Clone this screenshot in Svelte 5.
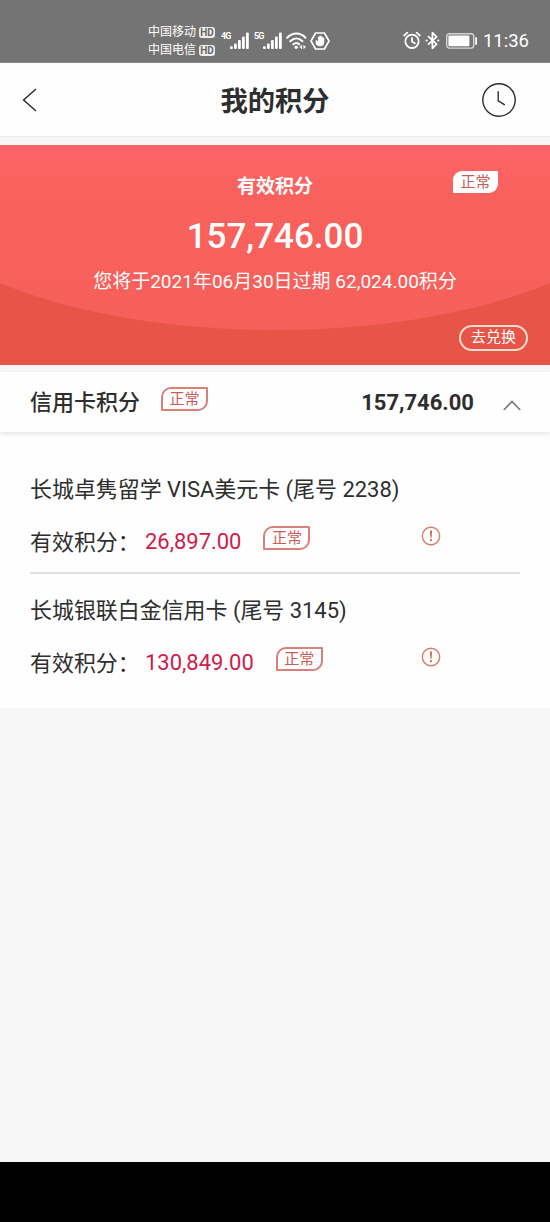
<script>
  const total = '157,746.00';
  const carriers = ['中国移动', '中国电信'];
  const signals = ['4G', '5G'];

  const cards = [
    { name: '长城卓隽留学 VISA美元卡', tail: '2238', points: '26,897.00' },
    { name: '长城银联白金信用卡', tail: '3145', points: '130,849.00' },
  ];

  let expanded = true;
</script>

<div class="screen">
  <div class="status-bar">
    <div class="carriers">
      {#each carriers as carrier}
        <div class="carrier">{carrier}<span class="hd">HD</span></div>
      {/each}
    </div>
    {#each signals as signal}
      <div class="signal">
        <span class="signal-type">{signal}</span>
        <svg width="19" height="18" viewBox="0 0 19 18" fill="#fff">
          <rect x="0" y="14.2" width="2.8" height="2.8" rx="1" />
          <rect x="4" y="11.5" width="2.8" height="5.5" rx="1" />
          <rect x="8" y="8" width="2.8" height="9" rx="1" />
          <rect x="12" y="4.5" width="2.8" height="12.5" rx="1" />
          <rect x="16" y="0.5" width="2.8" height="16.5" rx="1" />
        </svg>
      </div>
    {/each}
    <svg class="wifi" width="21" height="18" viewBox="0 0 21 18" fill="none" stroke="#fff" stroke-width="2" stroke-linecap="round">
      <path d="M1.2 5.8C6.5 0.2 14.5 0.2 19.5 5.8" />
      <path d="M4.3 9.3C8 5.7 12.8 5.7 16.4 9.3" />
      <path d="M7.3 12.3C9.3 10.6 11.4 10.6 13.2 12.3" />
      <circle cx="10.2" cy="15.2" r="1.7" fill="#fff" stroke="none" />
      <path d="M16 12.8v4.4l-2.6 -2.2zM17.4 12.8v4.4l2.6 -2.2z" fill="#fff" stroke="none" />
    </svg>
    <svg class="hand" width="20" height="18" viewBox="0 0 20 18" fill="none" stroke="#fff" stroke-width="1.7" stroke-linejoin="round">
      <path d="M5.6 1h8.8L19 9l-4.6 8H5.6L1 9z" />
      <path d="M5.6 8.4v2.2c0 2.2 1.6 3.6 4 3.6h1c2.2 0 3.6-1.4 3.6-3.6V5.8h-1.5V4.5h-1.5V3.8H9.4v.9H7.9v5L6.8 8.2z" fill="#fff" stroke="none" />
    </svg>
    <svg class="alarm" width="18" height="19" viewBox="0 0 18 19" fill="none" stroke="#fff" stroke-width="1.8" stroke-linecap="round">
      <circle cx="9" cy="10.3" r="6.7" />
      <path d="M9 6.8v3.8l2.8 1.7M1.2 4.5L4.3 1.7M16.8 4.5L13.7 1.7" />
    </svg>
    <svg class="bluetooth" width="15" height="19" viewBox="0 0 15 19" fill="none" stroke="#fff" stroke-width="1.7" stroke-linejoin="round">
      <path d="M3 5.2l8.6 8L7.4 17.3V1.7l4.2 4.1L3 13.6" />
      <circle cx="1.6" cy="9.5" r="1.1" fill="#fff" stroke="none" />
      <circle cx="13.3" cy="9.5" r="1.1" fill="#fff" stroke="none" />
    </svg>
    <svg class="battery" width="32" height="16" viewBox="0 0 32 16">
      <rect x="0.7" y="0.7" width="27" height="14.4" rx="2.5" fill="none" stroke="#d5d5d5" stroke-width="1.4" />
      <rect x="2.4" y="2.5" width="21" height="10.8" rx="1" fill="#fff" />
      <rect x="29.2" y="4" width="1.8" height="8" rx="0.9" fill="#fff" />
    </svg>
    <span class="time">11:36</span>
  </div>

  <header class="nav">
    <button class="icon-button" aria-label="返回">
      <svg width="15" height="24" viewBox="0 0 15 24" fill="none" stroke="#2d2d2d" stroke-width="1.5">
        <path d="M14 1L1.6 12L14 23" />
      </svg>
    </button>
    <h1>我的积分</h1>
    <button class="icon-button" aria-label="历史">
      <svg width="36" height="36" viewBox="0 0 36 36" fill="none" stroke="#2d2d2d" stroke-width="1.4">
        <circle cx="18" cy="18" r="16.2" />
        <path d="M17.2 9.2v9.6l6.6 4" />
      </svg>
    </button>
  </header>

  <section class="banner">
    <span class="badge filled">正常</span>
    <div class="banner-label">有效积分</div>
    <div class="banner-total">{total}</div>
    <div class="banner-note">您将于2021年06月30日过期 62,024.00积分</div>
    <button class="exchange">去兑换</button>
  </section>

  <div class="group">
    <span class="group-title">信用卡积分</span>
    <span class="badge">正常</span>
    <span class="group-total">{total}</span>
    <button class="icon-button" aria-label="展开" on:click={() => (expanded = !expanded)}>
      <svg class:collapsed={!expanded} width="18" height="11" viewBox="0 0 18 11" fill="none" stroke="#777" stroke-width="1.6">
        <path d="M0.8 10L9 1.4l8.2 8.6" />
      </svg>
    </button>
  </div>

  {#if expanded}
    <div class="card-list">
      {#each cards as card}
        <div class="card">
          <div class="card-name">{card.name} (尾号 {card.tail})</div>
          <div class="card-row">
            <div class="card-points">
              <span class="card-label">有效积分：</span>
              <span class="points">{card.points}</span>
              <span class="badge">正常</span>
            </div>
            <svg class="info" width="20" height="20" viewBox="0 0 20 20" fill="none" stroke="#d97b66" stroke-width="1.4">
              <circle cx="10" cy="10" r="8.7" />
              <path d="M8.9 4.6h2.2l-.5 7.2h-1.2z" fill="#d96a50" stroke="none" />
              <circle cx="10" cy="14.2" r="1.1" fill="#d96a50" stroke="none" />
            </svg>
          </div>
        </div>
      {/each}
    </div>
  {/if}

  <div class="bottom-bar"></div>
</div>

<style>
  :global(body) {
    margin: 0;
    background: #f7f7f7;
  }

  .screen {
    display: flex;
    flex-direction: column;
    width: 550px;
    height: 1222px;
    overflow: hidden;
    background: #f7f7f7;
    color: #2e2e2e;
    font-family: Roboto, 'Noto Sans CJK SC', sans-serif;
  }

  button {
    margin: 0;
    padding: 0;
    border: none;
    background: none;
    font-family: inherit;
    color: inherit;
  }

  svg {
    display: block;
    flex: none;
  }

  .icon-button {
    display: flex;
  }

  /* status bar */
  .status-bar {
    display: flex;
    align-items: center;
    box-sizing: border-box;
    flex: none;
    height: 63px;
    padding: 19px 21px 0 148px;
    border-bottom: 1px solid #8a8a8a;
    background: #747474;
    color: #fff;
  }

  .carriers {
    width: 73px;
    padding-top: 2px;
  }

  .carrier {
    display: flex;
    align-items: center;
    gap: 3px;
    height: 17.5px;
    font-size: 12px;
    line-height: 17.5px;
    white-space: nowrap;
  }

  .hd {
    width: 16px;
    height: 11px;
    border-radius: 3px;
    background: #eee;
    color: #666;
    font-size: 10px;
    font-weight: 700;
    line-height: 11px;
    text-align: center;
  }

  .signal {
    display: flex;
    align-items: flex-start;
    width: 33px;
  }

  .signal-type {
    width: 9px;
    font-size: 9px;
    font-weight: 700;
    line-height: 9px;
    letter-spacing: -0.8px;
  }

  .wifi {
    margin-left: -1px;
  }

  .hand {
    margin-left: 3px;
  }

  .alarm {
    margin-left: auto;
  }

  .bluetooth {
    margin-left: 4px;
  }

  .battery {
    margin-left: 6px;
  }

  .time {
    margin-left: 5px;
    font-size: 18.5px;
    line-height: 22px;
  }

  /* title bar */
  .nav {
    display: flex;
    align-items: center;
    justify-content: space-between;
    box-sizing: border-box;
    flex: none;
    height: 74px;
    padding: 0 33px 0 22px;
    border-bottom: 1px solid #ececec;
    background: #fefefe;
  }

  .nav .icon-button:first-child {
    width: 47px;
  }

  .nav .icon-button:last-child {
    width: 36px;
  }

  h1 {
    margin: 0;
    padding-top: 5px;
    font-size: 27.3px;
    font-weight: 700;
    line-height: 40px;
  }

  /* points banner */
  .banner {
    position: relative;
    display: flex;
    flex-direction: column;
    align-items: center;
    box-sizing: border-box;
    flex: none;
    height: 220px;
    margin-top: 8px;
    padding-top: 28px;
    overflow: hidden;
    background: #e75549;
    color: #fff;
    z-index: 0;
  }

  /* light disc whose lower edge makes the curve */
  .banner::before {
    content: '';
    position: absolute;
    left: -105px;
    bottom: 35px;
    z-index: -1;
    width: 760px;
    height: 304px;
    border-radius: 50%;
    background: linear-gradient(#ff6467 118px, #f8615c 175px, #f7605a);
  }

  .banner-label {
    font-size: 19px;
    font-weight: 700;
    line-height: 28px;
  }

  .banner-total {
    margin-top: 15px;
    font-size: 35px;
    font-weight: 500;
    line-height: 42px;
  }

  .banner-note {
    margin-top: 10px;
    font-size: 19px;
    line-height: 28px;
  }

  .badge {
    box-sizing: border-box;
    width: 47px;
    height: 24px;
    border: 2px solid #d98079;
    border-radius: 10px 1px 10px 1px;
    color: #cb5c55;
    font-size: 15px;
    line-height: 21px;
    text-align: center;
  }

  .badge.filled {
    position: absolute;
    top: 26px;
    right: 52px;
    width: 45px;
    height: 22px;
    border: none;
    border-radius: 9px 1px 9px 1px;
    background: #fff;
    line-height: 23px;
  }

  .exchange {
    position: absolute;
    right: 22px;
    bottom: 14px;
    box-sizing: border-box;
    width: 69px;
    height: 26px;
    padding-bottom: 2px;
    border: 2px solid #ffdccb;
    border-radius: 13px;
    color: #fff;
    font-size: 15px;
    line-height: 20px;
  }

  /* group header */
  .group {
    display: flex;
    align-items: center;
    box-sizing: border-box;
    flex: none;
    position: relative;
    height: 60px;
    margin-top: 7px;
    padding: 0 29px 0 30px;
    background: #fefefe;
    box-shadow: 0 2px 5px rgba(0, 0, 0, 0.1);
  }

  .group-title {
    padding-top: 2px;
    font-size: 22px;
    font-weight: 500;
    line-height: 32px;
  }

  .group .badge {
    margin: 0 auto 7px 21px;
  }

  .group-total {
    font-size: 22px;
    font-weight: 700;
  }

  .group .icon-button {
    margin: 6px 0 0 29px;
  }

  .collapsed {
    transform: rotate(180deg);
  }

  /* cards */
  .card-list {
    flex: none;
    height: 276px;
    padding: 0 30px;
    background: #fefefe;
    box-sizing: border-box;
  }

  .card {
    box-sizing: border-box;
    height: 121px;
    padding-top: 21px;
    font-size: 21.95px;
  }

  .card:first-child {
    height: 142px;
    padding-top: 42px;
    border-bottom: 2px solid #e2e2e2;
  }

  .card-name {
    line-height: 32px;
    white-space: nowrap;
  }

  .card-row {
    display: flex;
    margin-top: 20px;
  }

  .card-points {
    display: flex;
    width: 391px;
    line-height: 32px;
  }

  .card-label {
    width: 115px;
    padding-top: 1px;
    white-space: nowrap;
  }

  .points {
    color: #cf1c4b;
  }

  .card-row .badge {
    margin-left: 22px;
  }

  .bottom-bar {
    flex: none;
    height: 60px;
    margin-top: auto;
    background: #000;
  }
</style>
